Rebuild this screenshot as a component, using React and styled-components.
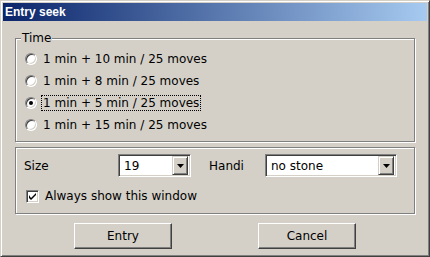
import styled, { createGlobalStyle } from "styled-components";

const GlobalStyle = createGlobalStyle`
  html, body {
    margin: 0;
    padding: 0;
    background: #d4d0c8;
  }
  * {
    box-sizing: border-box;
  }
  body {
    font-family: "DejaVu Sans", sans-serif;
    font-size: 12px;
    color: #000;
  }
`;

// Janela inteira com a moldura 3D clássica
const Window = styled.div`
  width: 430px;
  height: 257px;
  background: #d4d0c8;
  border: 1px solid;
  border-color: #d4d0c8 #404040 #404040 #d4d0c8;
  box-shadow: inset 1px 1px 0 #fff, inset -1px -1px 0 #808080;
  padding: 2px;
  display: flex;
  flex-direction: column;
`;

const TitleBar = styled.div`
  height: 18px;
  display: flex;
  align-items: center;
  padding-left: 2px;
  background: linear-gradient(to right, #0a246a, #a6caf0);
  color: #fff;
  font-family: "Liberation Sans", Arial, sans-serif;
  font-weight: bold;
  font-size: 12px;
`;

const Body = styled.div`
  padding: 17px 12px 0 12px;
  display: flex;
  flex-direction: column;
`;

// Moldura "etched" dos grupos
const Group = styled.div`
  position: relative;
  height: ${(p) => p.$height}px;
  margin-top: ${(p) => p.$gap || 0}px;
  border: 1px solid #808080;
  box-shadow: 1px 1px 0 #fff, inset 1px 1px 0 #fff;
  padding: ${(p) => p.$pad};
  display: flex;
  flex-direction: column;
`;

const Legend = styled.span`
  position: absolute;
  left: 5px;
  top: -8px;
  padding: 0 1px 0 1px;
  background: #d4d0c8;
  line-height: 14px;
`;

const RadioRow = styled.label`
  height: 22px;
  display: flex;
  align-items: center;
  padding-left: 9px;
`;

const RadioCircle = styled.span`
  position: relative;
  width: 12px;
  height: 12px;
  border-radius: 50%;
  background: #fff;
  border: 1px solid;
  border-color: #808080 #fff #fff #808080;
  box-shadow: inset 1px 1px 0 #404040, inset -1px -1px 0 #d4d0c8;
  margin-right: 4px;
  flex-shrink: 0;

  &::after {
    content: "";
    display: ${(p) => (p.$checked ? "block" : "none")};
    position: absolute;
    left: 3px;
    top: 3px;
    width: 4px;
    height: 4px;
    border-radius: 50%;
    background: #000;
  }
`;

const RadioText = styled.span`
  padding: 0 1px;
  line-height: 14px;
  border: 1px dotted ${(p) => (p.$focused ? "#000" : "transparent")};
`;

const FieldRow = styled.div`
  display: flex;
  align-items: center;
  height: 23px;
  padding-left: 8px;
`;

const FieldLabel = styled.span`
  width: ${(p) => p.$width}px;
  margin-left: ${(p) => p.$offset || 0}px;
`;

const Combo = styled.div`
  width: ${(p) => p.$width}px;
  height: 23px;
  background: #fff;
  border: 1px solid;
  border-color: #808080 #fff #fff #808080;
  box-shadow: inset 1px 1px 0 #404040, inset -1px -1px 0 #d4d0c8;
  padding: 2px;
  display: flex;
  align-items: center;
`;

const ComboText = styled.span`
  flex: 1;
  padding-left: 3px;
`;

const DropButton = styled.span`
  width: 16px;
  height: 19px;
  background: #d4d0c8;
  border: 1px solid;
  border-color: #d4d0c8 #404040 #404040 #d4d0c8;
  box-shadow: inset 1px 1px 0 #fff, inset -1px -1px 0 #808080;
  display: flex;
  align-items: center;
  justify-content: center;
`;

const CheckRow = styled.label`
  display: flex;
  align-items: center;
  height: 20px;
  margin-top: 9px;
  padding-left: 10px;
`;

const CheckBox = styled.span`
  width: 13px;
  height: 13px;
  background: #fff;
  border: 1px solid;
  border-color: #808080 #fff #fff #808080;
  box-shadow: inset 1px 1px 0 #404040, inset -1px -1px 0 #d4d0c8;
  display: flex;
  align-items: center;
  justify-content: center;
  margin-right: 6px;
`;

const ButtonRow = styled.div`
  display: flex;
  justify-content: center;
  gap: 86px;
  margin-top: 9px;
`;

const Button = styled.button`
  width: 98px;
  height: 26px;
  font: inherit;
  color: #000;
  background: #d4d0c8;
  border: 1px solid;
  border-color: #fff #404040 #404040 #fff;
  box-shadow: inset -1px -1px 0 #808080, inset 1px 1px 0 #d4d0c8;
  padding: 0;
`;

const Arrow = () => (
  <svg width="7" height="4" viewBox="0 0 7 4">
    <path d="M0 0h7l-3.5 4z" fill="#000" />
  </svg>
);

const options = [
  "1 min + 10 min / 25 moves",
  "1 min + 8 min / 25 moves",
  "1 min + 5 min / 25 moves",
  "1 min + 15 min / 25 moves",
];

const App = () => {
  const selected = 2;

  return (
    <>
      <GlobalStyle />
      <Window>
        <TitleBar>Entry seek</TitleBar>
        <Body>
          <Group $height={104} $pad="9px 0 0 0">
            <Legend>Time</Legend>
            {options.map((text, i) => (
              <RadioRow key={text}>
                <RadioCircle $checked={i === selected} />
                <RadioText $focused={i === selected}>{text}</RadioText>
              </RadioRow>
            ))}
          </Group>
          <Group $height={67} $gap={5} $pad="6px 0 0 0">
            <FieldRow>
              <FieldLabel $width={94}>Size</FieldLabel>
              <Combo $width={73}>
                <ComboText>19</ComboText>
                <DropButton>
                  <Arrow />
                </DropButton>
              </Combo>
              <FieldLabel $width={56} $offset={18}>
                Handi
              </FieldLabel>
              <Combo $width={132}>
                <ComboText>no stone</ComboText>
                <DropButton>
                  <Arrow />
                </DropButton>
              </Combo>
            </FieldRow>
            <CheckRow>
              <CheckBox>
                <svg width="7" height="7" viewBox="0 0 7 7">
                  <path d="M0 2v3l2 2l5-5v-2l-5 5z" fill="#000" />
                </svg>
              </CheckBox>
              Always show this window
            </CheckRow>
          </Group>
          <ButtonRow>
            <Button>Entry</Button>
            <Button>Cancel</Button>
          </ButtonRow>
        </Body>
      </Window>
    </>
  );
};

export default App;
